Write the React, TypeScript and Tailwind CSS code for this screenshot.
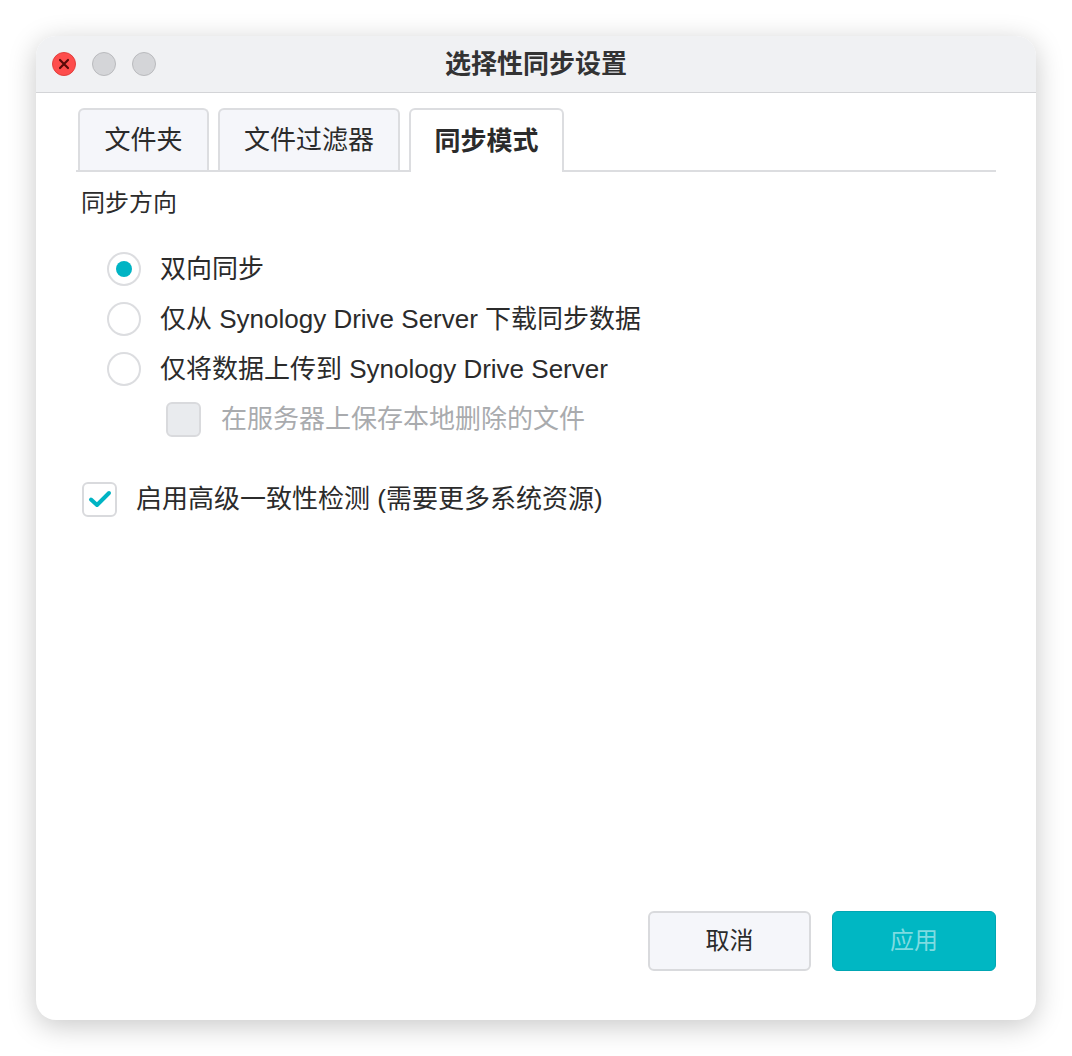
import React from 'react';

const font = { fontFamily: '"Liberation Sans", "Noto Sans CJK SC", sans-serif' };

function Radio({ checked, label }: { checked?: boolean; label: string }) {
  return (
    <div className="flex items-center h-[50px]">
      <div className="w-[34px] h-[34px] rounded-full border-2 border-[#dcdde0] bg-white flex items-center justify-center shrink-0">
        {checked && <div className="w-[16px] h-[16px] rounded-full bg-[#00b4c4]" />}
      </div>
      <span className="ml-[19px] text-[26px] text-[#2b2b2b]">{label}</span>
    </div>
  );
}

export default function App() {
  return (
    <div className="w-[1072px] h-[1056px] bg-white p-[36px]" style={font}>
      <div className="w-[1000px] h-[984px] rounded-[20px] bg-white shadow-[0_6px_28px_rgba(0,0,0,0.22)] flex flex-col overflow-hidden">
        {/* title bar */}
        <div className="h-[57px] shrink-0 bg-[#f0f1f3] border-b border-[#d3d4d7] flex items-center relative">
          <div className="flex items-center gap-[16px] pl-[16px]">
            <div className="w-[24px] h-[24px] rounded-full bg-[#fe4d4c] border border-[#e0403d] flex items-center justify-center">
              <svg width="12" height="12" viewBox="0 0 12 12">
                <path d="M2 2 L10 10 M10 2 L2 10" stroke="#5a0a08" strokeWidth="2.2" strokeLinecap="round" />
              </svg>
            </div>
            <div className="w-[24px] h-[24px] rounded-full bg-[#d4d5d8] border border-[#b9babd]" />
            <div className="w-[24px] h-[24px] rounded-full bg-[#d4d5d8] border border-[#b9babd]" />
          </div>
          <div className="absolute inset-0 flex items-center justify-center text-[26px] font-bold text-[#333333] pointer-events-none">
            选择性同步设置
          </div>
        </div>

        {/* content */}
        <div className="flex-1 flex flex-col px-[40px]">
          <div className="mt-[15px] flex items-end gap-[9px] pl-[2px] border-b-2 border-[#dcdde0] h-[64px]">
            <div className="w-[131px] h-[62px] rounded-t-[6px] border-2 border-b-0 border-[#dcdde0] bg-[#f5f6fa] flex items-center justify-center text-[26px] text-[#2b2b2b]">
              文件夹
            </div>
            <div className="w-[182px] h-[62px] rounded-t-[6px] border-2 border-b-0 border-[#dcdde0] bg-[#f5f6fa] flex items-center justify-center text-[26px] text-[#2b2b2b]">
              文件过滤器
            </div>
            <div className="w-[155px] h-[64px] -mb-[2px] rounded-t-[6px] border-2 border-b-0 border-[#dcdde0] bg-white flex items-center justify-center text-[26px] font-bold text-[#2b2b2b]">
              同步模式
            </div>
          </div>

          <div className="mt-[17px] text-[24px] leading-[28px] text-[#2b2b2b] pl-[5px]">同步方向</div>

          <div className="mt-[27px] pl-[31px] flex flex-col">
            <Radio checked label="双向同步" />
            <Radio label="仅从 Synology Drive Server 下载同步数据" />
            <Radio label="仅将数据上传到 Synology Drive Server" />
            <div className="flex items-center h-[50px] pl-[59px]">
              <div className="w-[35px] h-[35px] rounded-[6px] border-2 border-[#d9dadd] bg-[#e9ebee] shrink-0" />
              <span className="ml-[20px] text-[26px] text-[#a9abae]">在服务器上保存本地删除的文件</span>
            </div>
          </div>

          <div className="mt-[30px] flex items-center h-[50px] pl-[6px]">
            <div className="w-[35px] h-[35px] rounded-[6px] border-2 border-[#d9dadd] bg-white flex items-center justify-center shrink-0">
              <svg width="24" height="20" viewBox="0 0 24 20">
                <path d="M3 10.5 L9 16 L21 4" fill="none" stroke="#00b4c4" strokeWidth="4" strokeLinecap="round" strokeLinejoin="round" />
              </svg>
            </div>
            <span className="ml-[19px] text-[26px] text-[#2b2b2b]">启用高级一致性检测 (需要更多系统资源)</span>
          </div>

          <div className="mt-auto mb-[49px] flex justify-end gap-[21px]">
            <button className="w-[163px] h-[60px] rounded-[6px] border-2 border-[#d9dadd] bg-[#f5f6fa] text-[24px] text-[#2b2b2b]">
              取消
            </button>
            <button className="w-[164px] h-[60px] rounded-[6px] border border-[#00a6b3] bg-[#00b7c3] text-[24px] text-[#7fdbe1]">
              应用
            </button>
          </div>
        </div>
      </div>
    </div>
  );
}
